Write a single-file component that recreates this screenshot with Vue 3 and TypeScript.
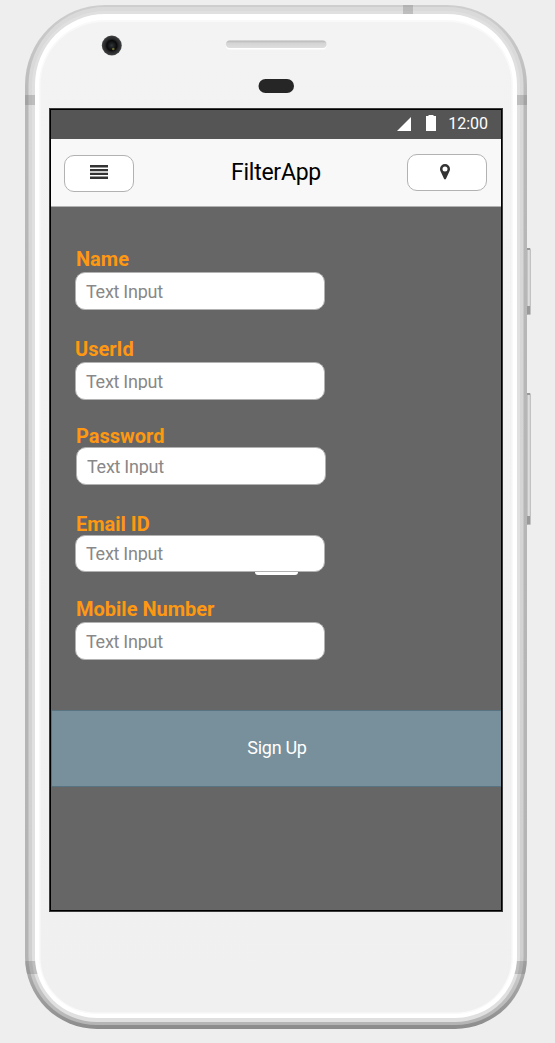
<script setup lang="ts">
interface Field {
  id: string
  label: string
}

const fields: Field[] = [
  { id: 'name', label: 'Name' },
  { id: 'userid', label: 'UserId' },
  { id: 'password', label: 'Password' },
  { id: 'email', label: 'Email ID' },
  { id: 'mobile', label: 'Mobile Number' },
]
</script>

<template>
  <div class="stage">
    <svg class="shell" width="555" height="1043" viewBox="0 0 555 1043" aria-hidden="true">
      <defs>
        <linearGradient id="side" x1="0" y1="0" x2="0" y2="1">
          <stop offset="0" stop-color="#cecece" />
          <stop offset="0.1" stop-color="#b8b8b8" />
          <stop offset="0.93" stop-color="#b4b4b4" />
          <stop offset="1" stop-color="#8c8c8c" />
        </linearGradient>
        <linearGradient id="mid" x1="0" y1="0" x2="0" y2="1">
          <stop offset="0" stop-color="#dadada" />
          <stop offset="0.93" stop-color="#d0d0d0" />
          <stop offset="1" stop-color="#b4b4b4" />
        </linearGradient>
        <linearGradient id="face" x1="0" y1="0" x2="0" y2="1">
          <stop offset="0" stop-color="#f3f3f3" />
          <stop offset="1" stop-color="#f0f0f0" />
        </linearGradient>
        <linearGradient id="key" x1="0" y1="0" x2="1" y2="0">
          <stop offset="0" stop-color="#acacac" />
          <stop offset="0.5" stop-color="#e4e4e4" />
          <stop offset="1" stop-color="#b8b8b8" />
        </linearGradient>
        <radialGradient id="lens">
          <stop offset="0" stop-color="#34383c" />
          <stop offset="0.2" stop-color="#202326" />
          <stop offset="0.5" stop-color="#0a0a0a" />
          <stop offset="0.65" stop-color="#242426" />
          <stop offset="0.9" stop-color="#38393b" />
          <stop offset="1" stop-color="#505254" />
        </radialGradient>
        <linearGradient id="grille" x1="0" y1="0" x2="0" y2="1">
          <stop offset="0" stop-color="#b5b5b5" />
          <stop offset="0.35" stop-color="#d4d4d4" />
          <stop offset="1" stop-color="#dedede" />
        </linearGradient>
        <clipPath id="body">
          <path d="M105 5H447A80 80 0 0 1 527 85V957A72 72 0 0 1 455 1029H97A72 72 0 0 1 25 957V85A80 80 0 0 1 105 5Z" />
        </clipPath>
      </defs>
      <g>
        <rect x="526.500" y="248" width="4.500" height="67" rx="1.500" fill="url(#key)" />
        <rect x="527" y="248" width="3" height="2" fill="#999" />
        <rect x="527" y="306" width="3" height="8.500" fill="#999" />
        <rect x="526.500" y="393" width="4.500" height="132" rx="1.500" fill="url(#key)" />
        <rect x="527" y="393" width="3" height="2" fill="#999" />
        <rect x="527" y="516" width="3" height="8.500" fill="#999" />
      </g>
      <path fill="url(#side)" d="M105 5H447A80 80 0 0 1 527 85V957A72 72 0 0 1 455 1029H97A72 72 0 0 1 25 957V85A80 80 0 0 1 105 5Z" />
      <path fill="url(#mid)" d="M105 7H447A76 78 0 0 1 523.500 85V957A68 68 0 0 1 455 1025H97A68 68 0 0 1 28.500 957V85A76 78 0 0 1 105 7Z" />
      <path fill="#e0e0e0" d="M105 11H447A73 74 0 0 1 520 85V957A65 65 0 0 1 455 1022H97A65 65 0 0 1 32 957V85A73 74 0 0 1 105 11Z" />
      <g clip-path="url(#body)" fill="#777" fill-opacity="0.32">
        <rect x="25" y="95" width="10" height="10" />
        <rect x="517" y="95" width="10" height="10" />
        <rect x="403" y="5" width="10" height="9" />
        <path d="M25 961H35.500L39 974H25Z" />
        <path d="M527 961H516.500L513 974H527Z" />
      </g>
      <path fill="#fff" d="M105 14H447A70 71 0 0 1 517 85V957A62 61 0 0 1 455 1018H97A62 61 0 0 1 35 957V85A70 71 0 0 1 105 14Z" />
      <path fill="#f9f9f9" d="M105 20H447A66 65 0 0 1 513 85V957A58 57 0 0 1 455 1014H97A58 57 0 0 1 39 957V85A66 65 0 0 1 105 20Z" />
      <path fill="url(#face)" d="M105 22H447A64 63 0 0 1 511.500 85V957A56 55 0 0 1 455 1012.500H97A56 55 0 0 1 40.500 957V85A64 63 0 0 1 105 22Z" />
      <circle cx="111.800" cy="45.500" r="10" fill="url(#lens)" />
      <circle cx="113.300" cy="49" r="1.300" fill="#6b6b35" />
      <rect x="226" y="42" width="100.500" height="7.500" rx="3.700" fill="#fff" />
      <rect x="226" y="40.500" width="100.500" height="7.500" rx="3.700" fill="url(#grille)" />
      <rect x="258.500" y="79" width="35.500" height="14" rx="7" fill="#262626" />
    </svg>

    <main class="screen">
      <div class="status">
        <svg class="signal" width="14" height="14" viewBox="0 0 14 14"><path d="M14 0V14H0Z" fill="#fff" /></svg>
        <svg class="battery" width="10" height="16" viewBox="0 0 10 16"><path d="M0 1H2.500V0H7.500V1H10V16H0Z" fill="#fff" /></svg>
        <span class="clock">12:00</span>
      </div>

      <header class="bar">
        <button class="btn menu" aria-label="Menu">
          <svg width="18" height="14" viewBox="0 0 18 14"><path d="M0 0H18V2.400H0ZM0 3.900H18V6.200H0ZM0 7.800H18V10.100H0ZM0 11.600H18V14H0Z" fill="#333" /></svg>
        </button>
        <h1 class="title">FilterApp</h1>
        <button class="btn place" aria-label="Location">
          <svg width="10" height="16" viewBox="0 0 10 16"><path fill-rule="evenodd" d="M5 0A5 5 0 0 1 10 5C10 6.500 9.500 7.300 9 8.200L6 14.800Q5 16 4 14.800L1 8.200C.5 7.300 0 6.500 0 5A5 5 0 0 1 5 0ZM5 2.500A2.500 2.500 0 1 0 5 7.500A2.500 2.500 0 1 0 5 2.500Z" fill="#333" /></svg>
        </button>
      </header>

      <form class="form" @submit.prevent>
        <div v-for="f in fields" :key="f.id" class="field" :class="f.id">
          <span class="label">{{ f.label }}</span>
          <div class="input"><span class="hint">Text Input</span></div>
        </div>
        <button class="signup">Sign Up</button>
      </form>
    </main>
  </div>
</template>

<style>
body {
  background: #eee;
}
</style>

<style scoped>
.stage {
  position: relative;
  box-sizing: border-box;
  width: 555px;
  height: 1043px;
  padding: 109px 0 0 50px;
  overflow: hidden;
  background: #eee;
  font-family: Roboto, "Liberation Sans", sans-serif;
}
.shell {
  position: absolute;
  inset: 0;
}
.screen {
  position: relative;
  width: 450px;
  height: 800px;
  border: 1px solid #000;
  box-shadow: 0 0 0 1px #3c3c3c;
  background: #666;
  display: flex;
  flex-direction: column;
}
.status {
  box-sizing: border-box;
  height: 29px;
  padding-right: 13px;
  background: #555;
  display: flex;
  align-items: center;
  justify-content: flex-end;
}
.signal {
  margin: 0 15px 1px 0;
}
.battery {
  margin: 0 12px 4px 0;
}
.clock {
  color: #fff;
  font-size: 16px;
  line-height: 20px;
  margin-bottom: 2px;
}
.bar {
  box-sizing: border-box;
  height: 68px;
  padding: 0 14px 0 13px;
  background: #f8f8f8;
  border-bottom: 1px solid #b2b2b2;
  display: grid;
  grid-template-columns: 80px 1fr 80px;
  align-items: start;
}
.btn {
  box-sizing: border-box;
  height: 37px;
  margin: 0;
  padding: 0;
  border: 1px solid #b2b2b2;
  border-radius: 10px;
  background: #fff;
  display: flex;
  justify-content: center;
}
.menu {
  width: 70px;
  margin-top: 16px;
  padding-top: 9px;
}
.place {
  width: 80px;
  margin-top: 15px;
  padding-top: 9px;
  padding-right: 4px;
}
.title {
  margin: 18px 0 0;
  padding-left: 1px;
  font-size: 23px;
  font-weight: 400;
  line-height: 31px;
  letter-spacing: -0.25px;
  text-align: center;
  color: #000;
}
.form {
  display: flex;
  flex-direction: column;
  padding-top: 41px;
}
.field {
  width: 250px;
  margin: 0 0 28px 24px;
  display: flex;
  flex-direction: column;
  gap: 2px;
}
.label {
  padding-left: 1px;
  height: 22px;
  line-height: 22px;
  font-size: 20px;
  font-weight: 700;
  color: #ff9811;
}
.input {
  box-sizing: border-box;
  height: 38px;
  padding: 9px 10px;
  border: 1px solid #b2b2b2;
  border-radius: 10px;
  background: #fff;
}
.hint {
  display: block;
  height: 18px;
  overflow: hidden;
  line-height: 20px;
  font-size: 18px;
  letter-spacing: -0.27px;
  color: #888;
}
.userid {
  margin-bottom: 25px;
}
.userid .label {
  padding-left: 0;
}
.password {
  gap: 0;
  margin-left: 25px;
}
.password .label {
  padding-left: 0;
}
.email {
  gap: 0;
  margin-bottom: 26px;
  position: relative;
}
.email .input {
  height: 37px;
}
.email .hint {
  margin-top: -1px;
}
.email::after {
  content: "";
  position: absolute;
  top: 59px;
  left: 180px;
  width: 43px;
  height: 3px;
  border-radius: 0 0 3px 3px;
  background: #fff;
}
.mobile {
  margin-bottom: 51px;
}
.signup {
  box-sizing: border-box;
  width: 450px;
  height: 77px;
  margin-top: -1px;
  padding: 0 0 2px 1px;
  border: 1px solid #587381;
  border-right: 0;
  background: #78909c;
  color: #fff;
  font-family: inherit;
  font-size: 18px;
  letter-spacing: -0.3px;
}
</style>
